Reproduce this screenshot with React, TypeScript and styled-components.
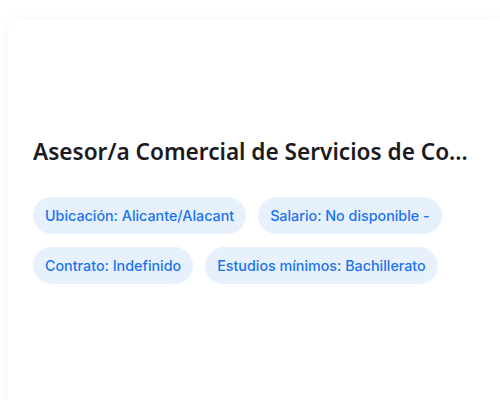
import styled, { createGlobalStyle } from 'styled-components';

const GlobalStyle = createGlobalStyle`
  html, body {
    margin: 0;
    padding: 0;
    background: #ffffff;
    font-family: 'Noto Sans', 'Open Sans', sans-serif;
  }
`;

const Page = styled.div`
  padding: 20px 0 0 8px;
  height: 400px;
  box-sizing: border-box;
  overflow: hidden;
`;

const Card = styled.div`
  width: 492px;
  min-height: 420px;
  box-sizing: border-box;
  background: #fff;
  border-radius: 12px 0 0 0;
  box-shadow: 0 0 12px rgba(0, 0, 0, 0.05);
  padding: 116px 25px 24px 25px;
`;

const Title = styled.h2`
  margin: 0 0 29px 0;
  font-size: 22.6px;
  font-weight: 600;
  line-height: 32px;
  color: #1b1b1f;
  white-space: nowrap;
  overflow: hidden;
  text-overflow: ellipsis;
  max-width: 440px;
`;

const Chips = styled.div`
  display: flex;
  flex-wrap: wrap;
  gap: 13px 12px;
  max-width: 420px;
`;

const Chip = styled.span`
  display: inline-flex;
  align-items: center;
  height: 37px;
  padding: 0 12px;
  border-radius: 19px;
  background: #e7f1fe;
  color: #1a73f0;
  font-family: Inter, 'Noto Sans', sans-serif;
  font-size: 14.3px;
  font-weight: 500;
`;

const tags = [
  'Ubicación: Alicante/Alacant',
  'Salario: No disponible -',
  'Contrato: Indefinido',
  'Estudios mínimos: Bachillerato',
];

export default function App() {
  return (
    <Page>
      <GlobalStyle />
      <Card>
        <Title>Asesor/a Comercial de Servicios de Comunicaciones</Title>
        <Chips>
          {tags.map((t) => (
            <Chip key={t}>{t}</Chip>
          ))}
        </Chips>
      </Card>
    </Page>
  );
}
